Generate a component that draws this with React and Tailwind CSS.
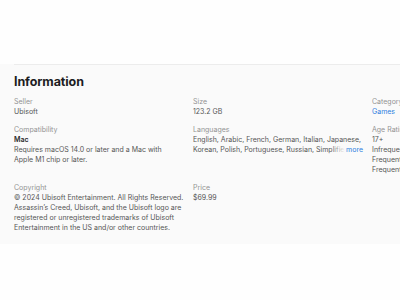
import React from 'react';

const languages =
  'English, Arabic, French, German, Italian, Japanese, Korean, Polish, Portuguese, Russian, Simplified Chinese, Spanish, Traditional Chinese';

const Field = ({ label, children }) => (
  <div className="flex flex-col">
    <span className="text-[#939393] leading-[10px]">{label}</span>
    <div className="text-[#555] leading-[10px]">{children}</div>
  </div>
);

const App = () => {
  return (
    <div className="w-[400px] h-[300px] overflow-hidden bg-[#fefefe] font-['Inter','Liberation_Sans',sans-serif] text-[7px]">
      <div className="h-[58px]" />
      <section className="w-[560px] bg-[#fafafa] pl-[14px] pb-[11px]">
        <div className="border-t border-[#ececec] mt-[6px]" />
        <h2 className="mt-[9px] text-[12.5px] font-bold text-[#1d1d1f] leading-[16px] tracking-[-0.1px]">
          Information
        </h2>
        <div className="mt-[7px] grid grid-cols-[172px_172px_172px] gap-x-[7px] gap-y-[8px]">
          <Field label="Seller">Ubisoft</Field>
          <Field label="Size">123.2 GB</Field>
          <Field label="Category">
            <span className="text-[#2f7fe0]">Games</span>
          </Field>

          <Field label="Compatibility">
            <div className="font-semibold text-[#2a2a2a]">Mac</div>
            <div>
              Requires macOS 14.0 or later and a Mac with
              <br />
              Apple M1 chip or later.
            </div>
          </Field>
          <Field label="Languages">
            <div className="relative w-[170px]">
              <p className="line-clamp-2">{languages}</p>
              <span className="absolute bottom-0 right-0 flex">
                <span className="w-[14px] bg-gradient-to-r from-transparent to-[#fafafa]" />
                <span className="bg-[#fafafa] pl-[1px] text-[#2f7fe0]">more</span>
              </span>
            </div>
          </Field>
          <Field label="Age Rating">
            <div>17+</div>
            <div>Infrequent/Mild Profanity or Crude Humor</div>
            <div>Frequent/Intense Cartoon or Fantasy Violence</div>
            <div>Frequent/Intense Realistic Violence</div>
          </Field>

          <Field label="Copyright">
            <div className="whitespace-nowrap">
              © 2024 Ubisoft Entertainment. All Rights Reserved.
              <br />
              Assassin’s Creed, Ubisoft, and the Ubisoft logo are
              <br />
              registered or unregistered trademarks of Ubisoft
              <br />
              Entertainment in the US and/or other countries.
            </div>
          </Field>
          <Field label="Price">$69.99</Field>
          <div />
        </div>
      </section>
    </div>
  );
};

export default App;
